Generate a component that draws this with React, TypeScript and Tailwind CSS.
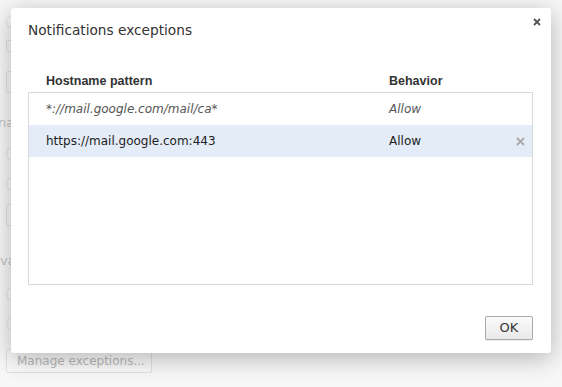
import React from "react";

function Circle() {
  return <div className="w-[14px] h-[14px] rounded-full border border-[#e2e2e2] bg-[#fafafa]" />;
}

export default function App() {
  return (
    <div
      className="relative w-[562px] h-[387px] overflow-hidden bg-[#f7f7f7]"
      style={{ fontFamily: '"DejaVu Sans", "Liberation Sans", sans-serif' }}
    >
      {/* faded page behind the overlay */}
      <div className="flex flex-col pl-[6px] text-[#c4c4c4] text-[13px]">
        <div className="mt-[15px]"><Circle /></div>
        <div className="mt-[11px] w-[60px] h-[12px] border border-[#e2e2e2] rounded-[2px]" />
        <div className="mt-[19px] w-[60px] h-[22px] border border-[#e2e2e2] rounded-[2px]" />
        <div className="mt-[20px] -ml-[8px] leading-[20px]">na</div>
        <div className="mt-[14px]"><Circle /></div>
        <div className="mt-[16px]"><Circle /></div>
        <div className="mt-[13px] w-[60px] h-[22px] border border-[#e2e2e2] rounded-[2px]" />
        <div className="mt-[25px] -ml-[6px] leading-[20px]">va</div>
        <div className="mt-[16px]"><Circle /></div>
        <div className="mt-[16px]"><Circle /></div>
        <div className="mt-[18px] w-[146px] h-[24px] border border-[#e0e0e0] rounded-[2px] bg-[#f9f9f9] flex items-center pl-[10px] text-[12px] text-[#b8b8b8]">
          Manage exceptions...
        </div>
      </div>

      {/* dialog */}
      <div className="absolute left-[11px] top-[8px] w-[540px] h-[345px] bg-white rounded-[3px] shadow-[0_5px_24px_rgba(0,0,0,0.28)] flex flex-col">
        <svg width="8" height="8" viewBox="0 0 8 8" className="absolute top-[10px] right-[10px]">
          <path d="M1 1 L7 7 M7 1 L1 7" stroke="#555" strokeWidth="1.8" />
        </svg>
        <div className="pl-[17px] pt-[12px]">
          <div className="text-[13.7px] text-[#333] leading-[20px]">Notifications exceptions</div>
        </div>
        <div
          className="mt-[33px] flex text-[12.5px] font-bold text-[#333] leading-[16px] pl-[35px]"
          style={{ fontFamily: '"Liberation Sans", Arial, sans-serif' }}
        >
          <div className="w-[343px]">Hostname pattern</div>
          <div>Behavior</div>
        </div>
        <div className="mt-[3px] ml-[17px] w-[505px] h-[193px] border border-[#d9d9d9] flex flex-col">
          <div className="h-[32px] flex items-center pl-[17px] text-[12px] italic text-[#555]">
            <div className="w-[343px]">*://mail.google.com/mail/ca*</div>
            <div>Allow</div>
          </div>
          <div className="h-[32px] flex items-center pl-[17px] pr-[7px] text-[12px] text-[#222] bg-[#e4ecf7]">
            <div className="w-[343px]">https://mail.google.com:443</div>
            <div className="flex-1">Allow</div>
            <svg width="9" height="9" viewBox="0 0 9 9">
              <path d="M1 1 L8 8 M8 1 L1 8" stroke="#a8a8a8" strokeWidth="1.8" />
            </svg>
          </div>
        </div>
        <div className="flex justify-end pr-[18px] mt-[31px]">
          <button className="w-[48px] h-[24px] rounded-[2px] border border-[#a9a9a9] bg-gradient-to-b from-[#fbfbfb] to-[#e9e9e9] text-[13px] text-[#333] shadow-[0_1px_0_rgba(0,0,0,0.08)]">
            OK
          </button>
        </div>
      </div>
    </div>
  );
}
